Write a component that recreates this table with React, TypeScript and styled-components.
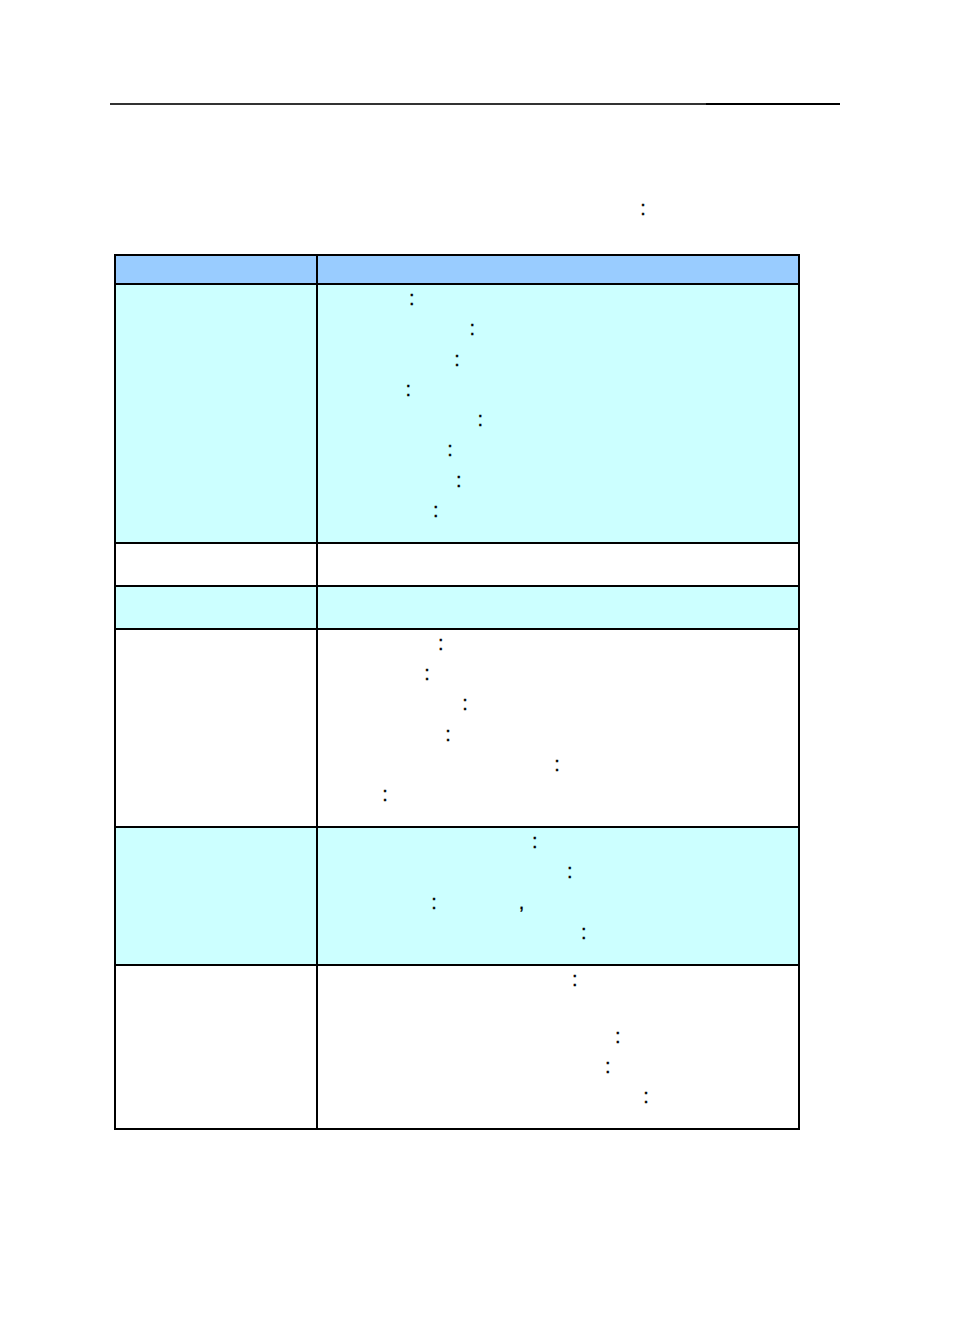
import React from 'react';
import styled, { createGlobalStyle } from 'styled-components';

const GlobalStyle = createGlobalStyle`
  body {
    margin: 0;
    background: #fff;
    font-family: "Liberation Sans", Arial, sans-serif;
    color: #000;
  }
`;

const Page = styled.div`
  width: 954px;
  min-height: 1336px;
  padding-top: 103px;
  box-sizing: border-box;
`;

const Rule = styled.div`
  margin-left: 110px;
  width: 730px;
  height: 2px;
  background: linear-gradient(to right, #333 0, #333 81.6%, #000 81.6%);
`;

const Content = styled.div`
  margin-left: 114px;
  width: 686px;
`;

const Intro = styled.div`
  margin-top: 90px;
  margin-bottom: 28.7px;
`;

const Table = styled.div`
  display: grid;
  grid-template-columns: 200px 480px;
  gap: 2px;
  border: 2px solid #000;
  background: #000;
`;

type Tone = 'head' | 'cyan' | 'white';

const toneColor: Record<Tone, string> = {
  head: '#99ccff',
  cyan: '#ccffff',
  white: '#ffffff',
};

const Cell = styled.div<{ $tone: Tone; $min?: number }>`
  background: ${({ $tone }) => toneColor[$tone]};
  min-height: ${({ $min }) => ($min ? `${$min}px` : '0')};
  padding-bottom: ${({ $min }) => ($min ? '0' : '14.5px')};
`;

const Line = styled.div<{ $indent: number; $space?: number }>`
  height: 30.3px;
  line-height: 26px;
  font-size: 20px;
  -webkit-text-stroke: 0.3px #000;
  padding-left: ${({ $indent }) => $indent}px;
  margin-bottom: ${({ $space }) => $space ?? 0}px;
  white-space: pre;
`;

const Spacer = styled.span<{ $w: number }>`
  display: inline-block;
  width: ${({ $w }) => $w}px;
`;

type Row = {
  tone: Tone;
  min?: number;
  lines: { indent: number; space?: number; comma?: number }[];
};

const rows: Row[] = [
  {
    tone: 'cyan',
    lines: [
      { indent: 90.9 },
      { indent: 151.5 },
      { indent: 136.2 },
      { indent: 87.5 },
      { indent: 159.5 },
      { indent: 129.2 },
      { indent: 137.9 },
      { indent: 114.9 },
    ],
  },
  { tone: 'white', min: 41, lines: [] },
  { tone: 'cyan', min: 41, lines: [] },
  {
    tone: 'white',
    lines: [
      { indent: 119.9 },
      { indent: 106.2 },
      { indent: 144.2 },
      { indent: 127.2 },
      { indent: 236.2 },
      { indent: 64.2 },
    ],
  },
  {
    tone: 'cyan',
    lines: [
      { indent: 213.9 },
      { indent: 248.9 },
      { indent: 113.2, comma: 82 },
      { indent: 262.9 },
    ],
  },
  {
    tone: 'white',
    lines: [
      { indent: 253.9, space: 26.5 },
      { indent: 296.9 },
      { indent: 286.9 },
      { indent: 325.2 },
    ],
  },
];

const App: React.FC = () => (
  <Page>
    <GlobalStyle />
    <Rule />
    <Content>
      <Intro>
        <Line $indent={526.2}>:</Line>
      </Intro>
      <Table>
        <Cell $tone="head" $min={27} />
        <Cell $tone="head" $min={27} />
        {rows.map((row, i) => (
          <React.Fragment key={i}>
            <Cell $tone={row.tone} $min={row.min} />
            <Cell $tone={row.tone} $min={row.min}>
              {row.lines.map((l, j) => (
                <Line key={j} $indent={l.indent} $space={l.space}>
                  :
                  {l.comma !== undefined && (
                    <>
                      <Spacer $w={l.comma} />,
                    </>
                  )}
                </Line>
              ))}
            </Cell>
          </React.Fragment>
        ))}
      </Table>
    </Content>
  </Page>
);

export default App;
